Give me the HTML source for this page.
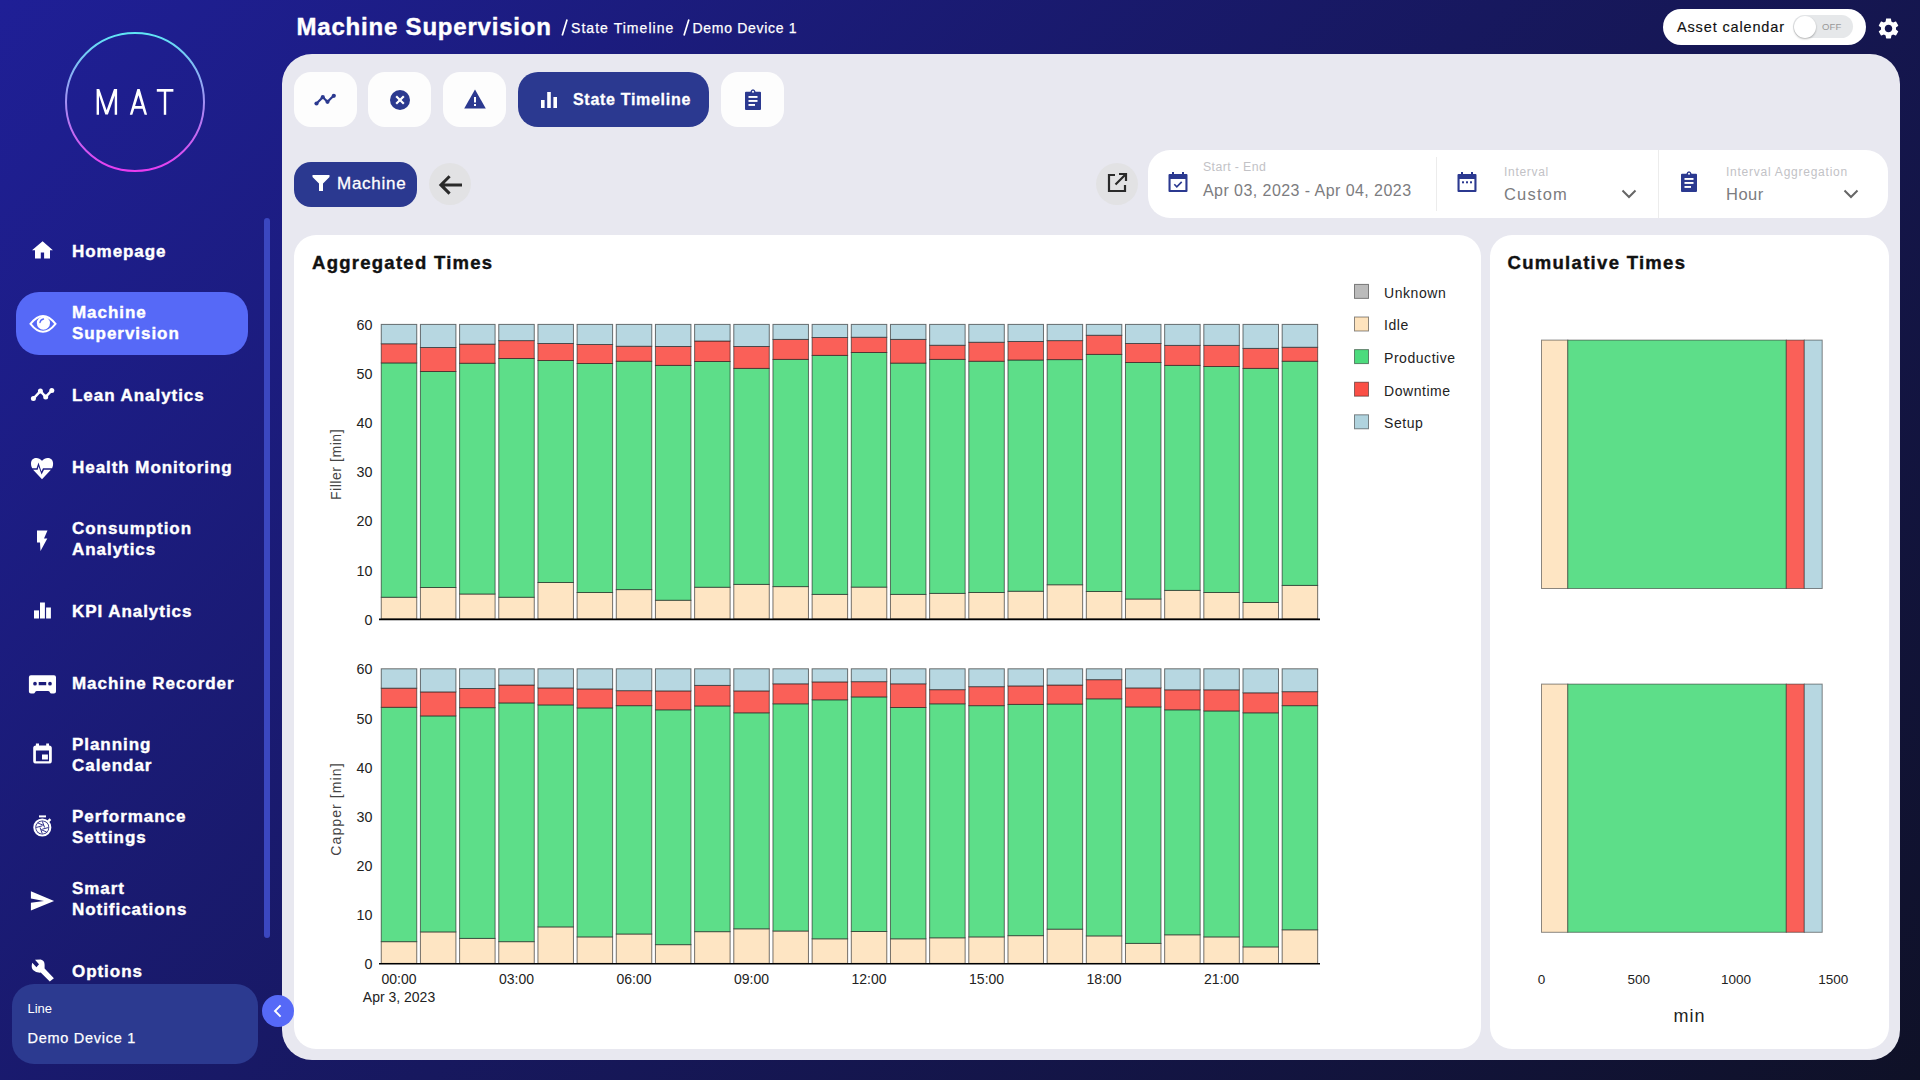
<!DOCTYPE html>
<html><head><meta charset="utf-8">
<style>
*{margin:0;padding:0;box-sizing:border-box}
html,body{width:1920px;height:1080px;overflow:hidden}
body{position:relative;font-family:"Liberation Sans",sans-serif;background:linear-gradient(135deg,#1f1f96 0%,#0f1127 100%);color:#fff}
.abs{position:absolute}
.nav{position:absolute;left:16px;width:232px;height:63px;border-radius:23px}
.nav.active{background:#5669f7}
.nav .lbl{position:absolute;left:56px;top:50%;transform:translateY(-50%);margin-top:-0.6px;font-weight:bold;font-size:17px;line-height:21px;letter-spacing:0.95px;color:#fff;white-space:nowrap;-webkit-text-stroke:0.4px #fff}
.nav svg{position:absolute;left:10px;top:50%;transform:translateY(-50%)}
.panel{position:absolute;left:282px;top:54px;width:1618px;height:1006px;background:#e8e8f0;border-radius:30px}
.tab{position:absolute;top:72px;height:55px;width:63px;background:#fdfdfd;border-radius:17px}
.tab svg{position:absolute;left:50%;top:50%;transform:translate(-50%,-50%)}
.card{position:absolute;background:#fff;border-radius:22px}
.ttl{position:absolute;font-weight:bold;font-size:18.5px;letter-spacing:0.75px;color:#111;white-space:nowrap;-webkit-text-stroke:0.4px #111}
</style></head>
<body>
<!-- logo -->
<svg class="abs" style="left:60px;top:27px" width="150" height="150">
<defs><linearGradient id="lg" x1="0" y1="0" x2="0" y2="1"><stop offset="0" stop-color="#5fe6f5"/><stop offset="1" stop-color="#e83cf0"/></linearGradient></defs>
<circle cx="75" cy="75" r="69" fill="none" stroke="url(#lg)" stroke-width="2"/>
</svg>
<svg class="abs" style="left:0;top:0" width="200" height="130"><g fill="#fff">
<path d="M96.6 114.8 L96.6 89 L99.3 89 L106.6 110.3 L114 89 L117.1 89 L117.1 114.8 L114.7 114.8 L114.7 95.5 L107.9 114.6 L105.3 114.6 L99 95.5 L99 114.8 Z"/>
<path d="M129.8 114.8 L137.3 89 L139.7 89 L147.1 114.8 L144.6 114.8 L142.6 108.7 L134.3 108.7 L132.3 114.8 Z M135.1 105.9 L141.8 105.9 L138.5 95.2 Z" fill-rule="evenodd"/>
<rect x="156.8" y="89" width="16.6" height="2.7"/><rect x="163.8" y="89" width="2.4" height="25.8"/>
</g></svg>

<!-- nav -->
<div class="nav" style="top:220px">
<svg width="30" height="30" viewBox="0 0 30 30"><path d="M16.6 4.2 L26.9 13.25 L24 13.25 L24 21.5 L18.1 21.5 L18.1 15.6 L14.8 15.6 L14.8 21.5 L9 21.5 L9 13.25 L6 13.25 Z" fill="#fff"/></svg>
<div class="lbl">Homepage</div></div>

<div class="nav active" style="top:292px">
<svg width="30" height="30" viewBox="0 0 30 30" style="left:12.5px;margin-top:0.7px"><path d="M1.5 14.8 Q14 -1 26.5 14.8 Q14 30.6 1.5 14.8 Z" fill="none" stroke="#fff" stroke-width="2"/><circle cx="14.4" cy="14.1" r="6.6" fill="#fff"/><path d="M11 13.5 Q11.5 10.5 14.5 10" stroke="#5669f7" stroke-width="1.4" fill="none" stroke-linecap="round"/></svg>
<div class="lbl">Machine<br>Supervision</div></div>

<div class="nav" style="top:364px">
<svg width="30" height="30" viewBox="0 0 30 30"><path d="M7.4 17.6 L14.4 10.1 L19.7 15.9 L25.8 9.4" fill="none" stroke="#fff" stroke-width="2.4" stroke-linejoin="round"/><circle cx="7.4" cy="17.6" r="2.5" fill="#fff"/><circle cx="14.4" cy="10.1" r="2.5" fill="#fff"/><circle cx="19.7" cy="15.9" r="2.5" fill="#fff"/><circle cx="25.8" cy="9.4" r="2.5" fill="#fff"/></svg>
<div class="lbl">Lean Analytics</div></div>

<div class="nav" style="top:436px">
<svg width="30" height="30" viewBox="0 0 30 30"><path d="M15.5 7.6 C13 3.5 5 4 5 10.5 C5 12.5 5.6 14 6.2 15.2 L10.6 15.2 L12.5 9.6 L15.4 18.6 L17 15.2 L26.1 15.2 C26.6 14 27.1 12.5 27.1 10.5 C27.1 4 19 3.5 16.5 7.6 Z M7.1 16.8 L16 26.3 L24.9 16.8 L18 16.8 L15.6 21.4 L12.5 13.2 L11.7 16.8 Z" fill="#fff"/></svg>
<div class="lbl">Health Monitoring</div></div>

<div class="nav" style="top:508px">
<svg width="30" height="30" viewBox="0 0 30 30"><path d="M11 5.5 L21.5 5.5 L18 13.5 L21.3 13.5 L14.5 26 L14 17.5 L11 17.5 Z" fill="#fff"/></svg>
<div class="lbl">Consumption<br>Analytics</div></div>

<div class="nav" style="top:580px">
<svg width="30" height="30" viewBox="0 0 30 30"><rect x="8" y="13.4" width="5" height="8.1" fill="#fff"/><rect x="14" y="5.5" width="4.9" height="16" fill="#fff"/><rect x="20.1" y="10.5" width="4.8" height="11" fill="#fff"/></svg>
<div class="lbl">KPI Analytics</div></div>

<div class="nav" style="top:652px">
<svg width="32" height="30" viewBox="0 0 32 30"><path d="M4.9 6.3 L28 6.3 Q30 6.3 30 8.3 L30 22.6 Q30 24.6 28 24.6 L25.5 24.6 Q24.3 24.6 23.8 23.2 L23.4 22.4 Q23 22 22.2 22 L10.7 22 Q9.9 22 9.5 22.4 L9.1 23.2 Q8.6 24.6 7.4 24.6 L4.9 24.6 Q2.9 24.6 2.9 22.6 L2.9 8.3 Q2.9 6.3 4.9 6.3 Z M9 12.8 A1.85 1.85 0 1 0 9 16.5 A1.85 1.85 0 1 0 9 12.8 Z M12.7 13.1 L12.7 16.3 L20.2 16.3 L20.2 13.1 Z M24 12.8 A1.85 1.85 0 1 0 24 16.5 A1.85 1.85 0 1 0 24 12.8 Z" fill="#fff" fill-rule="evenodd"/></svg>
<div class="lbl">Machine Recorder</div></div>

<div class="nav" style="top:724px">
<svg width="30" height="30" viewBox="0 0 30 30"><path d="M9.9 2.4 L13 2.4 L13 4.5 L20.2 4.5 L20.2 2.4 L23 2.4 L23 4.5 Q25.8 4.5 25.8 7 L25.8 20 Q25.8 22.5 23.3 22.5 L9.7 22.5 Q7.2 22.5 7.2 20 L7.2 7 Q7.2 4.5 9.9 4.5 Z M9.9 9.5 L9.9 20.3 L23 20.3 L23 9.5 Z M16 13.4 L21.9 13.4 L21.9 18.4 L16 18.4 Z" fill="#fff" fill-rule="evenodd"/></svg>
<div class="lbl">Planning<br>Calendar</div></div>

<div class="nav" style="top:796px">
<svg width="30" height="30" viewBox="0 0 30 30"><rect x="13" y="2.4" width="7" height="2" fill="#fff"/><circle cx="16.3" cy="14.5" r="8" fill="none" stroke="#fff" stroke-width="2.1"/><circle cx="16.3" cy="14.5" r="6.2" fill="#fff"/><g stroke="#1c1c7e" stroke-width="0.9" fill="none"><path d="M16.3 8.3 L18.6 14.5"/><path d="M22.5 14.5 L16.3 16.2"/><path d="M16.3 20.7 L14 14.5"/><path d="M10.1 14.5 L16.3 12.8"/><path d="M12 10 L17.6 12.4"/><path d="M20.6 19 L15 16.6"/></g><path d="M22.2 8.4 L24.4 6.2" stroke="#fff" stroke-width="2.4"/></svg>
<div class="lbl">Performance<br>Settings</div></div>

<div class="nav" style="top:868px">
<svg width="30" height="30" viewBox="0 0 30 30"><path d="M4.9 6.2 L28.1 15.9 L4.9 25.6 L4.9 17.8 L18 15.9 L4.9 13.4 Z" fill="#fff"/></svg>
<div class="lbl">Smart<br>Notifications</div></div>

<div class="nav" style="top:940px">
<svg width="30" height="30" viewBox="0 0 30 30"><path d="M9 2.7 L14.7 2.5 Q18.6 3.5 18.6 7.8 L18.6 11.5 L27.9 21.2 L23.8 24.5 L14.7 15.6 Q10 15.9 7 13 Q4.8 10.5 6.3 5.75 L10.4 10.2 L13 7.3 Z" fill="#fff"/></svg>
<div class="lbl">Options</div></div>

<!-- scrollbar -->
<div class="abs" style="left:264px;top:218px;width:6px;height:720px;border-radius:3px;background:#3b47c0"></div>

<!-- line box -->
<div class="abs" style="left:12px;top:984px;width:246px;height:80px;border-radius:22px;background:#2c3a90"></div>
<div class="abs" style="left:27.5px;top:1001.9px;font-size:13px;color:#fff;line-height:1">Line</div>
<div class="abs" style="left:27.5px;top:1030.9px;font-size:14.5px;color:#fff;line-height:1;letter-spacing:0.72px;-webkit-text-stroke:0.25px #fff">Demo Device 1</div>

<!-- main panel -->
<div class="panel"></div>

<!-- collapse -->
<div class="abs" style="left:262px;top:994.5px;width:32px;height:32px;border-radius:50%;background:#5669f7"></div>
<svg class="abs" style="left:262px;top:994.5px" width="32" height="32"><path d="M18.6 10.3 L13 16 L18.6 21.7" fill="none" stroke="#fff" stroke-width="1.9"/></svg>

<!-- header -->
<div class="abs" style="left:296.5px;top:15px;font-size:24px;font-weight:bold;letter-spacing:0.8px;line-height:1;white-space:nowrap;-webkit-text-stroke:0.4px #fff">Machine Supervision</div>
<svg class="abs" style="left:555px;top:15px" width="150" height="25"><path d="M12.1 4.4 L7.2 20.6 M133.9 4.4 L129 20.6" stroke="#fff" stroke-width="1.7"/></svg>
<div class="abs" style="left:571px;top:20.9px;font-size:14px;line-height:1;white-space:nowrap;-webkit-text-stroke:0.25px #fff;letter-spacing:1.05px">State Timeline</div>
<div class="abs" style="left:692.5px;top:20.9px;font-size:14px;line-height:1;white-space:nowrap;-webkit-text-stroke:0.25px #fff;letter-spacing:0.7px">Demo Device 1</div>

<!-- asset calendar -->
<div class="abs" style="left:1663px;top:9px;width:203px;height:36px;border-radius:18px;background:#fff"></div>
<div class="abs" style="left:1677px;top:19.6px;font-size:14.5px;line-height:1;color:#111;white-space:nowrap;letter-spacing:0.85px;-webkit-text-stroke:0.15px #111">Asset calendar</div>
<div class="abs" style="left:1793px;top:15px;width:60px;height:23px;border-radius:12px;background:#e6e8ea"></div>
<div class="abs" style="left:1793.5px;top:15.5px;width:22.5px;height:22.5px;border-radius:50%;background:#fff;box-shadow:0 1px 2px rgba(0,0,0,0.3)"></div>
<div class="abs" style="left:1822px;top:22px;font-size:9.5px;line-height:1;color:#999;letter-spacing:0.2px">OFF</div>
<svg class="abs" style="left:1876px;top:16px" width="25" height="25" viewBox="0 0 24 24"><path fill="#fff" d="M19.14 12.94c.04-.3.06-.61.06-.94 0-.32-.02-.64-.07-.94l2.03-1.58c.18-.14.23-.41.12-.61l-1.92-3.32c-.12-.22-.37-.29-.59-.22l-2.39.96c-.5-.38-1.03-.7-1.62-.94l-.36-2.54c-.04-.24-.24-.41-.48-.41h-3.84c-.24 0-.43.17-.47.41l-.36 2.54c-.59.24-1.13.57-1.62.94l-2.39-.96c-.22-.08-.47 0-.59.22L2.74 8.87c-.12.21-.08.47.12.61l2.03 1.58c-.05.3-.09.63-.09.94s.02.64.07.94l-2.03 1.58c-.18.14-.23.41-.12.61l1.92 3.32c.12.22.37.29.59.22l2.39-.96c.5.38 1.03.7 1.62.94l.36 2.54c.05.24.24.41.48.41h3.84c.24 0 .44-.17.47-.41l.36-2.54c.59-.24 1.13-.56 1.62-.94l2.39.96c.22.08.47 0 .59-.22l1.92-3.32c.12-.22.07-.47-.12-.61l-2.01-1.58zM12 15.6c-1.98 0-3.6-1.62-3.6-3.6s1.62-3.6 3.6-3.6 3.6 1.62 3.6 3.6-1.62 3.6-3.6 3.6z"/></svg>

<!-- tabs -->
<div class="tab" style="left:294px"><svg width="26" height="26" viewBox="0 0 26 26"><path d="M3.5 16.5 L9.8 10.2 L14.5 14.8 L20.3 9" fill="none" stroke="#2b3990" stroke-width="2.2" stroke-linejoin="round"/><circle cx="3.5" cy="16.5" r="2.1" fill="#2b3990"/><circle cx="9.8" cy="10.2" r="2.1" fill="#2b3990"/><circle cx="14.5" cy="14.8" r="2.1" fill="#2b3990"/><circle cx="20.8" cy="8.8" r="2.1" fill="#2b3990"/></svg></div>
<div class="tab" style="left:368px"><svg width="24" height="24" viewBox="0 0 24 24"><circle cx="12" cy="12" r="10" fill="#2b3990"/><path d="M8.2 8.2 L15.8 15.8 M15.8 8.2 L8.2 15.8" stroke="#fff" stroke-width="2.2"/></svg></div>
<div class="tab" style="left:443px"><svg width="24" height="24" viewBox="0 0 24 24"><path d="M12 1.6 L22.8 20.6 L1.2 20.6 Z" fill="#2b3990"/><rect x="11" y="9" width="2" height="5.5" fill="#fff"/><rect x="11" y="16" width="2" height="2" fill="#fff"/></svg></div>
<div class="abs" style="left:518px;top:72px;width:191px;height:55px;border-radius:20px;background:#2b3990"></div>
<svg class="abs" style="left:539px;top:90px" width="21" height="20" viewBox="0 0 21 20"><rect x="2" y="10" width="3.6" height="8" fill="#fff"/><rect x="8.2" y="2" width="3.6" height="16" fill="#fff"/><rect x="14.4" y="7" width="3.6" height="11" fill="#fff"/></svg>
<div class="abs" style="left:573px;top:91.5px;font-size:16px;font-weight:bold;line-height:1;letter-spacing:0.7px;white-space:nowrap;-webkit-text-stroke:0.3px #fff">State Timeline</div>
<div class="tab" style="left:721px"><svg width="24" height="24" viewBox="0 0 24 24"><path d="M5 3.8 L9.4 3.8 Q10 1.3 12 1.3 Q14 1.3 14.6 3.8 L19 3.8 Q20 3.8 20 4.8 L20 21 Q20 22 19 22 L5 22 Q4 22 4 21 L4 4.8 Q4 3.8 5 3.8 Z" fill="#2b3990"/><circle cx="12" cy="3.7" r="1" fill="#fff"/><rect x="7.5" y="8" width="9" height="1.9" fill="#fff"/><rect x="7.5" y="12" width="9" height="1.9" fill="#fff"/><rect x="7.5" y="16" width="6.5" height="1.9" fill="#fff"/></svg></div>

<!-- filter row -->
<div class="abs" style="left:294px;top:162px;width:123px;height:45px;border-radius:17px;background:#2b3990"></div>
<svg class="abs" style="left:311px;top:173px" width="20" height="20" viewBox="0 0 20 20"><path d="M1.5 2 L18.5 2 L18.5 4 L12 10.5 L12 18 L8 18 L8 10.5 L1.5 4 Z" fill="#fff"/></svg>
<div class="abs" style="left:337px;top:175.1px;font-size:17px;line-height:1;white-space:nowrap;-webkit-text-stroke:0.3px #fff;letter-spacing:0.73px">Machine</div>
<div class="abs" style="left:429px;top:163px;width:42px;height:42px;border-radius:50%;background:#e2e2e4"></div>
<svg class="abs" style="left:437px;top:172px" width="27" height="25" viewBox="0 0 27 25"><path d="M25 12.9 L4 12.9 M12.6 4.2 L3.9 12.9 L12.6 21.6" fill="none" stroke="#2a2a2a" stroke-width="3"/></svg>

<!-- external link -->
<div class="abs" style="left:1096px;top:163px;width:42px;height:42px;border-radius:50%;background:#e2e2e4"></div>
<svg class="abs" style="left:1106px;top:172px" width="22" height="22" viewBox="0 0 22 22"><path d="M9 3 L3 3 L3 19 L19 19 L19 13" fill="none" stroke="#2a2a2a" stroke-width="2.2"/><path d="M9.5 12.5 L19.5 2.5 M13 2 L20 2 L20 9" fill="none" stroke="#2a2a2a" stroke-width="2.2"/></svg>

<!-- date selector -->
<div class="abs" style="left:1148px;top:150px;width:740px;height:68px;border-radius:22px;background:#fff"></div>
<div class="abs" style="left:1436px;top:157px;width:1px;height:54px;background:#ececec"></div>
<div class="abs" style="left:1658px;top:150px;width:1px;height:68px;background:#ececec"></div>
<svg class="abs" style="left:1166px;top:170px" width="24" height="24" viewBox="0 0 24 24"><path d="M6 2 L8 2 L8 4 L16 4 L16 2 L18 2 L18 4 L20.5 4 Q21.5 4 21.5 5 L21.5 21 Q21.5 22 20.5 22 L3.5 22 Q2.5 22 2.5 21 L2.5 5 Q2.5 4 3.5 4 L6 4 Z M4.6 9 L4.6 20 L19.4 20 L19.4 9 Z" fill="#2b3990" fill-rule="evenodd"/><path d="M8.3 14.3 L10.8 16.8 L15.7 11.9" fill="none" stroke="#2b3990" stroke-width="1.6"/></svg>
<div class="abs" style="left:1203px;top:160.8px;font-size:12.3px;line-height:1;color:#c2c2c6;white-space:nowrap;letter-spacing:0.4px">Start - End</div>
<div class="abs" style="left:1203px;top:182.5px;font-size:16px;line-height:1;color:#7c7c80;white-space:nowrap;letter-spacing:0.44px">Apr 03, 2023 - Apr 04, 2023</div>

<svg class="abs" style="left:1455px;top:170px" width="24" height="24" viewBox="0 0 24 24"><path d="M6 2 L8 2 L8 4 L16 4 L16 2 L18 2 L18 4 L20.5 4 Q21.5 4 21.5 5 L21.5 21 Q21.5 22 20.5 22 L3.5 22 Q2.5 22 2.5 21 L2.5 5 Q2.5 4 3.5 4 L6 4 Z M4.6 9 L4.6 20 L19.4 20 L19.4 9 Z" fill="#2b3990" fill-rule="evenodd"/><rect x="7" y="11.3" width="2" height="2" fill="#2b3990"/><rect x="11" y="11.3" width="2" height="2" fill="#2b3990"/><rect x="15" y="11.3" width="2" height="2" fill="#2b3990"/></svg>
<div class="abs" style="left:1504px;top:165.9px;font-size:12px;line-height:1;color:#c2c2c6;white-space:nowrap;letter-spacing:0.7px">Interval</div>
<div class="abs" style="left:1504px;top:185.6px;font-size:16.5px;line-height:1;color:#7c7c80;white-space:nowrap;letter-spacing:1.2px">Custom</div>
<svg class="abs" style="left:1620px;top:186px" width="18" height="16" viewBox="0 0 18 16"><path d="M2.5 4.5 L9 11 L15.5 4.5" fill="none" stroke="#666" stroke-width="2"/></svg>

<svg class="abs" style="left:1677px;top:170px" width="24" height="24" viewBox="0 0 24 24"><path d="M5 3.8 L9.4 3.8 Q10 1.3 12 1.3 Q14 1.3 14.6 3.8 L19 3.8 Q20 3.8 20 4.8 L20 21 Q20 22 19 22 L5 22 Q4 22 4 21 L4 4.8 Q4 3.8 5 3.8 Z" fill="#2b3990"/><circle cx="12" cy="3.7" r="1" fill="#fff"/><rect x="7.5" y="8" width="9" height="1.9" fill="#fff"/><rect x="7.5" y="12" width="9" height="1.9" fill="#fff"/><rect x="7.5" y="16" width="6.5" height="1.9" fill="#fff"/></svg>
<div class="abs" style="left:1726px;top:165.9px;font-size:12px;line-height:1;color:#c2c2c6;white-space:nowrap;letter-spacing:0.76px">Interval Aggregation</div>
<div class="abs" style="left:1726px;top:185.6px;font-size:16.5px;line-height:1;color:#7c7c80;white-space:nowrap;letter-spacing:0.5px">Hour</div>
<svg class="abs" style="left:1842px;top:186px" width="18" height="16" viewBox="0 0 18 16"><path d="M2.5 4.5 L9 11 L15.5 4.5" fill="none" stroke="#666" stroke-width="2"/></svg>

<!-- cards -->
<div class="card" style="left:294px;top:235px;width:1187px;height:814px"></div>
<div class="card" style="left:1490px;top:235px;width:399px;height:814px"></div>
<div class="ttl" style="left:312px;top:254.1px;line-height:1;letter-spacing:1.27px">Aggregated Times</div>
<div class="ttl" style="left:1507.5px;top:253.7px;line-height:1;letter-spacing:1.3px">Cumulative Times</div>


<svg width="1920" height="1080" style="position:absolute;left:0;top:0" font-family='"Liberation Sans", sans-serif' font-size="14" fill="#222">
<g opacity="0.9" stroke="rgba(0,0,0,0.6)" stroke-width="1">
<rect x="381.25" y="597.25" width="35.5" height="21.75" fill="#fee3bd"/>
<rect x="381.25" y="362.90" width="35.5" height="234.35" fill="#4cdb7d"/>
<rect x="381.25" y="343.75" width="35.5" height="19.15" fill="#fa4f46"/>
<rect x="381.25" y="324.40" width="35.5" height="19.35" fill="#b0d3de"/>
<rect x="420.42" y="587.50" width="35.5" height="31.50" fill="#fee3bd"/>
<rect x="420.42" y="371.50" width="35.5" height="216.00" fill="#4cdb7d"/>
<rect x="420.42" y="347.50" width="35.5" height="24.00" fill="#fa4f46"/>
<rect x="420.42" y="324.40" width="35.5" height="23.10" fill="#b0d3de"/>
<rect x="459.59" y="594.00" width="35.5" height="25.00" fill="#fee3bd"/>
<rect x="459.59" y="363.25" width="35.5" height="230.75" fill="#4cdb7d"/>
<rect x="459.59" y="344.10" width="35.5" height="19.15" fill="#fa4f46"/>
<rect x="459.59" y="324.40" width="35.5" height="19.70" fill="#b0d3de"/>
<rect x="498.76" y="597.25" width="35.5" height="21.75" fill="#fee3bd"/>
<rect x="498.76" y="358.50" width="35.5" height="238.75" fill="#4cdb7d"/>
<rect x="498.76" y="340.60" width="35.5" height="17.90" fill="#fa4f46"/>
<rect x="498.76" y="324.40" width="35.5" height="16.20" fill="#b0d3de"/>
<rect x="537.93" y="582.50" width="35.5" height="36.50" fill="#fee3bd"/>
<rect x="537.93" y="360.50" width="35.5" height="222.00" fill="#4cdb7d"/>
<rect x="537.93" y="343.50" width="35.5" height="17.00" fill="#fa4f46"/>
<rect x="537.93" y="324.40" width="35.5" height="19.10" fill="#b0d3de"/>
<rect x="577.10" y="592.50" width="35.5" height="26.50" fill="#fee3bd"/>
<rect x="577.10" y="363.50" width="35.5" height="229.00" fill="#4cdb7d"/>
<rect x="577.10" y="344.50" width="35.5" height="19.00" fill="#fa4f46"/>
<rect x="577.10" y="324.40" width="35.5" height="20.10" fill="#b0d3de"/>
<rect x="616.27" y="589.60" width="35.5" height="29.40" fill="#fee3bd"/>
<rect x="616.27" y="361.25" width="35.5" height="228.35" fill="#4cdb7d"/>
<rect x="616.27" y="346.25" width="35.5" height="15.00" fill="#fa4f46"/>
<rect x="616.27" y="324.40" width="35.5" height="21.85" fill="#b0d3de"/>
<rect x="655.44" y="600.25" width="35.5" height="18.75" fill="#fee3bd"/>
<rect x="655.44" y="365.40" width="35.5" height="234.85" fill="#4cdb7d"/>
<rect x="655.44" y="346.50" width="35.5" height="18.90" fill="#fa4f46"/>
<rect x="655.44" y="324.40" width="35.5" height="22.10" fill="#b0d3de"/>
<rect x="694.61" y="587.25" width="35.5" height="31.75" fill="#fee3bd"/>
<rect x="694.61" y="361.50" width="35.5" height="225.75" fill="#4cdb7d"/>
<rect x="694.61" y="341.00" width="35.5" height="20.50" fill="#fa4f46"/>
<rect x="694.61" y="324.40" width="35.5" height="16.60" fill="#b0d3de"/>
<rect x="733.78" y="584.40" width="35.5" height="34.60" fill="#fee3bd"/>
<rect x="733.78" y="368.40" width="35.5" height="216.00" fill="#4cdb7d"/>
<rect x="733.78" y="346.50" width="35.5" height="21.90" fill="#fa4f46"/>
<rect x="733.78" y="324.40" width="35.5" height="22.10" fill="#b0d3de"/>
<rect x="772.95" y="586.60" width="35.5" height="32.40" fill="#fee3bd"/>
<rect x="772.95" y="359.40" width="35.5" height="227.20" fill="#4cdb7d"/>
<rect x="772.95" y="339.40" width="35.5" height="20.00" fill="#fa4f46"/>
<rect x="772.95" y="324.40" width="35.5" height="15.00" fill="#b0d3de"/>
<rect x="812.12" y="594.40" width="35.5" height="24.60" fill="#fee3bd"/>
<rect x="812.12" y="355.40" width="35.5" height="239.00" fill="#4cdb7d"/>
<rect x="812.12" y="337.50" width="35.5" height="17.90" fill="#fa4f46"/>
<rect x="812.12" y="324.40" width="35.5" height="13.10" fill="#b0d3de"/>
<rect x="851.29" y="587.10" width="35.5" height="31.90" fill="#fee3bd"/>
<rect x="851.29" y="352.50" width="35.5" height="234.60" fill="#4cdb7d"/>
<rect x="851.29" y="337.25" width="35.5" height="15.25" fill="#fa4f46"/>
<rect x="851.29" y="324.40" width="35.5" height="12.85" fill="#b0d3de"/>
<rect x="890.46" y="594.40" width="35.5" height="24.60" fill="#fee3bd"/>
<rect x="890.46" y="363.10" width="35.5" height="231.30" fill="#4cdb7d"/>
<rect x="890.46" y="339.40" width="35.5" height="23.70" fill="#fa4f46"/>
<rect x="890.46" y="324.40" width="35.5" height="15.00" fill="#b0d3de"/>
<rect x="929.63" y="593.40" width="35.5" height="25.60" fill="#fee3bd"/>
<rect x="929.63" y="359.40" width="35.5" height="234.00" fill="#4cdb7d"/>
<rect x="929.63" y="345.25" width="35.5" height="14.15" fill="#fa4f46"/>
<rect x="929.63" y="324.40" width="35.5" height="20.85" fill="#b0d3de"/>
<rect x="968.80" y="592.50" width="35.5" height="26.50" fill="#fee3bd"/>
<rect x="968.80" y="361.25" width="35.5" height="231.25" fill="#4cdb7d"/>
<rect x="968.80" y="342.25" width="35.5" height="19.00" fill="#fa4f46"/>
<rect x="968.80" y="324.40" width="35.5" height="17.85" fill="#b0d3de"/>
<rect x="1007.97" y="591.25" width="35.5" height="27.75" fill="#fee3bd"/>
<rect x="1007.97" y="360.00" width="35.5" height="231.25" fill="#4cdb7d"/>
<rect x="1007.97" y="341.50" width="35.5" height="18.50" fill="#fa4f46"/>
<rect x="1007.97" y="324.40" width="35.5" height="17.10" fill="#b0d3de"/>
<rect x="1047.14" y="584.75" width="35.5" height="34.25" fill="#fee3bd"/>
<rect x="1047.14" y="359.60" width="35.5" height="225.15" fill="#4cdb7d"/>
<rect x="1047.14" y="340.60" width="35.5" height="19.00" fill="#fa4f46"/>
<rect x="1047.14" y="324.40" width="35.5" height="16.20" fill="#b0d3de"/>
<rect x="1086.31" y="591.50" width="35.5" height="27.50" fill="#fee3bd"/>
<rect x="1086.31" y="354.40" width="35.5" height="237.10" fill="#4cdb7d"/>
<rect x="1086.31" y="335.25" width="35.5" height="19.15" fill="#fa4f46"/>
<rect x="1086.31" y="324.40" width="35.5" height="10.85" fill="#b0d3de"/>
<rect x="1125.48" y="599.00" width="35.5" height="20.00" fill="#fee3bd"/>
<rect x="1125.48" y="362.50" width="35.5" height="236.50" fill="#4cdb7d"/>
<rect x="1125.48" y="343.50" width="35.5" height="19.00" fill="#fa4f46"/>
<rect x="1125.48" y="324.40" width="35.5" height="19.10" fill="#b0d3de"/>
<rect x="1164.65" y="590.40" width="35.5" height="28.60" fill="#fee3bd"/>
<rect x="1164.65" y="365.40" width="35.5" height="225.00" fill="#4cdb7d"/>
<rect x="1164.65" y="345.40" width="35.5" height="20.00" fill="#fa4f46"/>
<rect x="1164.65" y="324.40" width="35.5" height="21.00" fill="#b0d3de"/>
<rect x="1203.82" y="592.50" width="35.5" height="26.50" fill="#fee3bd"/>
<rect x="1203.82" y="366.50" width="35.5" height="226.00" fill="#4cdb7d"/>
<rect x="1203.82" y="345.40" width="35.5" height="21.10" fill="#fa4f46"/>
<rect x="1203.82" y="324.40" width="35.5" height="21.00" fill="#b0d3de"/>
<rect x="1242.99" y="602.50" width="35.5" height="16.50" fill="#fee3bd"/>
<rect x="1242.99" y="368.40" width="35.5" height="234.10" fill="#4cdb7d"/>
<rect x="1242.99" y="348.40" width="35.5" height="20.00" fill="#fa4f46"/>
<rect x="1242.99" y="324.40" width="35.5" height="24.00" fill="#b0d3de"/>
<rect x="1282.16" y="585.40" width="35.5" height="33.60" fill="#fee3bd"/>
<rect x="1282.16" y="361.25" width="35.5" height="224.15" fill="#4cdb7d"/>
<rect x="1282.16" y="347.25" width="35.5" height="14.00" fill="#fa4f46"/>
<rect x="1282.16" y="324.40" width="35.5" height="22.85" fill="#b0d3de"/>
<rect x="381.25" y="941.65" width="35.5" height="21.75" fill="#fee3bd"/>
<rect x="381.25" y="707.30" width="35.5" height="234.35" fill="#4cdb7d"/>
<rect x="381.25" y="688.15" width="35.5" height="19.15" fill="#fa4f46"/>
<rect x="381.25" y="668.80" width="35.5" height="19.35" fill="#b0d3de"/>
<rect x="420.42" y="931.90" width="35.5" height="31.50" fill="#fee3bd"/>
<rect x="420.42" y="715.90" width="35.5" height="216.00" fill="#4cdb7d"/>
<rect x="420.42" y="691.90" width="35.5" height="24.00" fill="#fa4f46"/>
<rect x="420.42" y="668.80" width="35.5" height="23.10" fill="#b0d3de"/>
<rect x="459.59" y="938.40" width="35.5" height="25.00" fill="#fee3bd"/>
<rect x="459.59" y="707.65" width="35.5" height="230.75" fill="#4cdb7d"/>
<rect x="459.59" y="688.50" width="35.5" height="19.15" fill="#fa4f46"/>
<rect x="459.59" y="668.80" width="35.5" height="19.70" fill="#b0d3de"/>
<rect x="498.76" y="941.65" width="35.5" height="21.75" fill="#fee3bd"/>
<rect x="498.76" y="702.90" width="35.5" height="238.75" fill="#4cdb7d"/>
<rect x="498.76" y="685.00" width="35.5" height="17.90" fill="#fa4f46"/>
<rect x="498.76" y="668.80" width="35.5" height="16.20" fill="#b0d3de"/>
<rect x="537.93" y="926.90" width="35.5" height="36.50" fill="#fee3bd"/>
<rect x="537.93" y="704.90" width="35.5" height="222.00" fill="#4cdb7d"/>
<rect x="537.93" y="687.90" width="35.5" height="17.00" fill="#fa4f46"/>
<rect x="537.93" y="668.80" width="35.5" height="19.10" fill="#b0d3de"/>
<rect x="577.10" y="936.90" width="35.5" height="26.50" fill="#fee3bd"/>
<rect x="577.10" y="707.90" width="35.5" height="229.00" fill="#4cdb7d"/>
<rect x="577.10" y="688.90" width="35.5" height="19.00" fill="#fa4f46"/>
<rect x="577.10" y="668.80" width="35.5" height="20.10" fill="#b0d3de"/>
<rect x="616.27" y="934.00" width="35.5" height="29.40" fill="#fee3bd"/>
<rect x="616.27" y="705.65" width="35.5" height="228.35" fill="#4cdb7d"/>
<rect x="616.27" y="690.65" width="35.5" height="15.00" fill="#fa4f46"/>
<rect x="616.27" y="668.80" width="35.5" height="21.85" fill="#b0d3de"/>
<rect x="655.44" y="944.65" width="35.5" height="18.75" fill="#fee3bd"/>
<rect x="655.44" y="709.80" width="35.5" height="234.85" fill="#4cdb7d"/>
<rect x="655.44" y="690.90" width="35.5" height="18.90" fill="#fa4f46"/>
<rect x="655.44" y="668.80" width="35.5" height="22.10" fill="#b0d3de"/>
<rect x="694.61" y="931.65" width="35.5" height="31.75" fill="#fee3bd"/>
<rect x="694.61" y="705.90" width="35.5" height="225.75" fill="#4cdb7d"/>
<rect x="694.61" y="685.40" width="35.5" height="20.50" fill="#fa4f46"/>
<rect x="694.61" y="668.80" width="35.5" height="16.60" fill="#b0d3de"/>
<rect x="733.78" y="928.80" width="35.5" height="34.60" fill="#fee3bd"/>
<rect x="733.78" y="712.80" width="35.5" height="216.00" fill="#4cdb7d"/>
<rect x="733.78" y="690.90" width="35.5" height="21.90" fill="#fa4f46"/>
<rect x="733.78" y="668.80" width="35.5" height="22.10" fill="#b0d3de"/>
<rect x="772.95" y="931.00" width="35.5" height="32.40" fill="#fee3bd"/>
<rect x="772.95" y="703.80" width="35.5" height="227.20" fill="#4cdb7d"/>
<rect x="772.95" y="683.80" width="35.5" height="20.00" fill="#fa4f46"/>
<rect x="772.95" y="668.80" width="35.5" height="15.00" fill="#b0d3de"/>
<rect x="812.12" y="938.80" width="35.5" height="24.60" fill="#fee3bd"/>
<rect x="812.12" y="699.80" width="35.5" height="239.00" fill="#4cdb7d"/>
<rect x="812.12" y="681.90" width="35.5" height="17.90" fill="#fa4f46"/>
<rect x="812.12" y="668.80" width="35.5" height="13.10" fill="#b0d3de"/>
<rect x="851.29" y="931.50" width="35.5" height="31.90" fill="#fee3bd"/>
<rect x="851.29" y="696.90" width="35.5" height="234.60" fill="#4cdb7d"/>
<rect x="851.29" y="681.65" width="35.5" height="15.25" fill="#fa4f46"/>
<rect x="851.29" y="668.80" width="35.5" height="12.85" fill="#b0d3de"/>
<rect x="890.46" y="938.80" width="35.5" height="24.60" fill="#fee3bd"/>
<rect x="890.46" y="707.50" width="35.5" height="231.30" fill="#4cdb7d"/>
<rect x="890.46" y="683.80" width="35.5" height="23.70" fill="#fa4f46"/>
<rect x="890.46" y="668.80" width="35.5" height="15.00" fill="#b0d3de"/>
<rect x="929.63" y="937.80" width="35.5" height="25.60" fill="#fee3bd"/>
<rect x="929.63" y="703.80" width="35.5" height="234.00" fill="#4cdb7d"/>
<rect x="929.63" y="689.65" width="35.5" height="14.15" fill="#fa4f46"/>
<rect x="929.63" y="668.80" width="35.5" height="20.85" fill="#b0d3de"/>
<rect x="968.80" y="936.90" width="35.5" height="26.50" fill="#fee3bd"/>
<rect x="968.80" y="705.65" width="35.5" height="231.25" fill="#4cdb7d"/>
<rect x="968.80" y="686.65" width="35.5" height="19.00" fill="#fa4f46"/>
<rect x="968.80" y="668.80" width="35.5" height="17.85" fill="#b0d3de"/>
<rect x="1007.97" y="935.65" width="35.5" height="27.75" fill="#fee3bd"/>
<rect x="1007.97" y="704.40" width="35.5" height="231.25" fill="#4cdb7d"/>
<rect x="1007.97" y="685.90" width="35.5" height="18.50" fill="#fa4f46"/>
<rect x="1007.97" y="668.80" width="35.5" height="17.10" fill="#b0d3de"/>
<rect x="1047.14" y="929.15" width="35.5" height="34.25" fill="#fee3bd"/>
<rect x="1047.14" y="704.00" width="35.5" height="225.15" fill="#4cdb7d"/>
<rect x="1047.14" y="685.00" width="35.5" height="19.00" fill="#fa4f46"/>
<rect x="1047.14" y="668.80" width="35.5" height="16.20" fill="#b0d3de"/>
<rect x="1086.31" y="935.90" width="35.5" height="27.50" fill="#fee3bd"/>
<rect x="1086.31" y="698.80" width="35.5" height="237.10" fill="#4cdb7d"/>
<rect x="1086.31" y="679.65" width="35.5" height="19.15" fill="#fa4f46"/>
<rect x="1086.31" y="668.80" width="35.5" height="10.85" fill="#b0d3de"/>
<rect x="1125.48" y="943.40" width="35.5" height="20.00" fill="#fee3bd"/>
<rect x="1125.48" y="706.90" width="35.5" height="236.50" fill="#4cdb7d"/>
<rect x="1125.48" y="687.90" width="35.5" height="19.00" fill="#fa4f46"/>
<rect x="1125.48" y="668.80" width="35.5" height="19.10" fill="#b0d3de"/>
<rect x="1164.65" y="934.80" width="35.5" height="28.60" fill="#fee3bd"/>
<rect x="1164.65" y="709.80" width="35.5" height="225.00" fill="#4cdb7d"/>
<rect x="1164.65" y="689.80" width="35.5" height="20.00" fill="#fa4f46"/>
<rect x="1164.65" y="668.80" width="35.5" height="21.00" fill="#b0d3de"/>
<rect x="1203.82" y="936.90" width="35.5" height="26.50" fill="#fee3bd"/>
<rect x="1203.82" y="710.90" width="35.5" height="226.00" fill="#4cdb7d"/>
<rect x="1203.82" y="689.80" width="35.5" height="21.10" fill="#fa4f46"/>
<rect x="1203.82" y="668.80" width="35.5" height="21.00" fill="#b0d3de"/>
<rect x="1242.99" y="946.90" width="35.5" height="16.50" fill="#fee3bd"/>
<rect x="1242.99" y="712.80" width="35.5" height="234.10" fill="#4cdb7d"/>
<rect x="1242.99" y="692.80" width="35.5" height="20.00" fill="#fa4f46"/>
<rect x="1242.99" y="668.80" width="35.5" height="24.00" fill="#b0d3de"/>
<rect x="1282.16" y="929.80" width="35.5" height="33.60" fill="#fee3bd"/>
<rect x="1282.16" y="705.65" width="35.5" height="224.15" fill="#4cdb7d"/>
<rect x="1282.16" y="691.65" width="35.5" height="14.00" fill="#fa4f46"/>
<rect x="1282.16" y="668.80" width="35.5" height="22.85" fill="#b0d3de"/>
</g>
<text x="372.5" y="624.6" text-anchor="end" font-size="14.3">0</text>
<text x="372.5" y="575.5" text-anchor="end" font-size="14.3">10</text>
<text x="372.5" y="526.4" text-anchor="end" font-size="14.3">20</text>
<text x="372.5" y="477.3" text-anchor="end" font-size="14.3">30</text>
<text x="372.5" y="428.2" text-anchor="end" font-size="14.3">40</text>
<text x="372.5" y="379.1" text-anchor="end" font-size="14.3">50</text>
<text x="372.5" y="330.0" text-anchor="end" font-size="14.3">60</text>
<line x1="379" y1="619.4" x2="1320" y2="619.4" stroke="#000" stroke-width="1.6"/>
<text x="372.5" y="969.0" text-anchor="end" font-size="14.3">0</text>
<text x="372.5" y="919.9" text-anchor="end" font-size="14.3">10</text>
<text x="372.5" y="870.8" text-anchor="end" font-size="14.3">20</text>
<text x="372.5" y="821.7" text-anchor="end" font-size="14.3">30</text>
<text x="372.5" y="772.6" text-anchor="end" font-size="14.3">40</text>
<text x="372.5" y="723.5" text-anchor="end" font-size="14.3">50</text>
<text x="372.5" y="674.4" text-anchor="end" font-size="14.3">60</text>
<line x1="379" y1="963.8" x2="1320" y2="963.8" stroke="#000" stroke-width="1.6"/>
<text transform="translate(341.3,464.5) rotate(-90)" text-anchor="middle" fill="#444" letter-spacing="0.55">Filler [min]</text>
<text transform="translate(341.3,809) rotate(-90)" text-anchor="middle" fill="#444" letter-spacing="1.1">Capper [min]</text>
<text x="399.0" y="984" text-anchor="middle">00:00</text>
<text x="516.5" y="984" text-anchor="middle">03:00</text>
<text x="634.0" y="984" text-anchor="middle">06:00</text>
<text x="751.5" y="984" text-anchor="middle">09:00</text>
<text x="869.0" y="984" text-anchor="middle">12:00</text>
<text x="986.6" y="984" text-anchor="middle">15:00</text>
<text x="1104.1" y="984" text-anchor="middle">18:00</text>
<text x="1221.6" y="984" text-anchor="middle">21:00</text>
<text x="399" y="1001.5" text-anchor="middle">Apr 3, 2023</text>
<rect x="1354.5" y="284.4" width="14" height="14" fill="#bbbbbb" stroke="rgba(0,0,0,0.45)" stroke-width="1"/>
<text x="1384" y="297.7" letter-spacing="0.55">Unknown</text>
<rect x="1354.5" y="317.0" width="14" height="14" fill="#fee3bd" stroke="rgba(0,0,0,0.45)" stroke-width="1"/>
<text x="1384" y="330.3" letter-spacing="0.55">Idle</text>
<rect x="1354.5" y="349.6" width="14" height="14" fill="#4cdb7d" stroke="rgba(0,0,0,0.45)" stroke-width="1"/>
<text x="1384" y="362.9" letter-spacing="0.55">Productive</text>
<rect x="1354.5" y="382.2" width="14" height="14" fill="#fa4f46" stroke="rgba(0,0,0,0.45)" stroke-width="1"/>
<text x="1384" y="395.5" letter-spacing="0.55">Downtime</text>
<rect x="1354.5" y="414.8" width="14" height="14" fill="#b0d3de" stroke="rgba(0,0,0,0.45)" stroke-width="1"/>
<text x="1384" y="428.1" letter-spacing="0.55">Setup</text>
<g opacity="0.9" stroke="rgba(0,0,0,0.5)" stroke-width="1"><rect x="1541.5" y="340.1" width="26.3" height="248.4" fill="#fee3bd"/><rect x="1567.8" y="340.1" width="218.5" height="248.4" fill="#4cdb7d"/><rect x="1786.3" y="340.1" width="18.0" height="248.4" fill="#fa4f46"/><rect x="1804.3" y="340.1" width="17.9" height="248.4" fill="#b0d3de"/></g>
<g opacity="0.9" stroke="rgba(0,0,0,0.5)" stroke-width="1"><rect x="1541.5" y="684.1" width="26.3" height="248.2" fill="#fee3bd"/><rect x="1567.8" y="684.1" width="218.5" height="248.2" fill="#4cdb7d"/><rect x="1786.3" y="684.1" width="18.0" height="248.2" fill="#fa4f46"/><rect x="1804.3" y="684.1" width="17.9" height="248.2" fill="#b0d3de"/></g>
<text x="1541.5" y="984" text-anchor="middle" font-size="13.5">0</text>
<text x="1638.7" y="984" text-anchor="middle" font-size="13.5">500</text>
<text x="1736" y="984" text-anchor="middle" font-size="13.5">1000</text>
<text x="1833.2" y="984" text-anchor="middle" font-size="13.5">1500</text>
<text x="1689.5" y="1022" text-anchor="middle" font-size="18" letter-spacing="1">min</text>
</svg>
</body></html>
